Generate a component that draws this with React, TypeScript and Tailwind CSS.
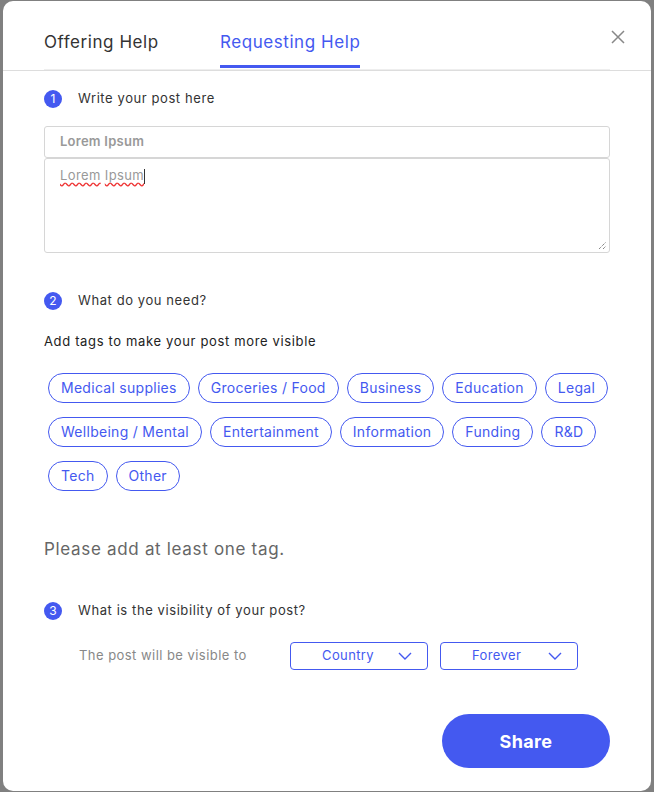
import React from "react"

const tags = [
  ["Medical supplies", "Groceries / Food", "Business", "Education", "Legal"],
  ["Wellbeing / Mental", "Entertainment", "Information", "Funding", "R&D"],
  ["Tech", "Other"],
]

const Step: React.FC<{ n: number; children: React.ReactNode }> = props => (
  <div className="flex items-center h-[18px]">
    <span className="flex items-center justify-center w-[18px] h-[18px] rounded-full bg-[#4459f0] text-white text-[12px]">
      {props.n}
    </span>
    <span className="ml-4 text-[13px] tracking-[0.045em] text-[#333]">{props.children}</span>
  </div>
)

const Chevron = () => (
  <svg width="14" height="8" viewBox="0 0 14 8" fill="none" stroke="#4459f0" strokeWidth="1.4">
    <path d="M1 1l6 6 6-6" />
  </svg>
)

const Select: React.FC<{ label: string }> = props => (
  <div className="flex items-center w-[138px] h-[28px] border border-[#4459f0] rounded-[4px] pl-[31px] pr-[15px] text-[13px] tracking-[0.03em] text-[#4459f0]">
    <span className="flex-1">{props.label}</span>
    <Chevron />
  </div>
)

export default function App() {
  return (
    <div className="bg-[#808080] w-[654px] h-[792px] pt-px px-[3px] font-['Inter',sans-serif]">
      <div className="bg-white rounded-[10px] h-[790px] relative">
        <button className="absolute right-[25px] top-[28px] text-[#888]">
          <svg width="16" height="16" viewBox="0 0 16 16" stroke="currentColor" strokeWidth="1.5">
            <path d="M2 2l12 12M14 2L2 14" />
          </svg>
        </button>
        <div className="border-b border-[#ddd]">
          <div className="mx-[41px] border-b border-[#eee] flex pt-[29px] h-[69px] tracking-[0.035em]">
            <div className="text-[17px] text-[#333] w-[176px]">Offering Help</div>
            <div className="text-[17px] text-[#4459f0] border-b-[3px] border-[#4459f0] h-[38px]">Requesting Help</div>
          </div>
        </div>

        <div className="px-[41px] pt-[19px]">
          <Step n={1}>Write your post here</Step>
          <div className="mt-[18px] border border-[#d6d6d6] rounded-[3px] h-[32px] flex items-center px-[15px] text-[13px] tracking-[0.02em] font-semibold text-[#999]">
            Lorem Ipsum
          </div>
          <div className="border border-[#d6d6d6] rounded-[3px] h-[95px] px-[15px] pt-[7px] text-[13px] tracking-[0.03em] text-[#999] relative">
            <span className="underline decoration-wavy decoration-[#e33] underline-offset-2">Lorem</span>{" "}
            <span className="underline decoration-wavy decoration-[#e33] underline-offset-2">Ipsum</span>
            <span className="inline-block w-px h-[15px] bg-[#333] align-middle" />
            <svg className="absolute right-[2px] bottom-[2px]" width="9" height="9" viewBox="0 0 9 9" stroke="#555" strokeWidth="1" strokeDasharray="1 1">
              <path d="M1 8L8 1M5 8L8 5" />
            </svg>
          </div>

          <div className="mt-[39px]">
            <Step n={2}>What do you need?</Step>
          </div>
          <p className="mt-[22px] text-[13px] tracking-[0.05em] text-[#222]">Add tags to make your post more visible</p>
          <div className="mt-[21px] ml-[4px] flex flex-col gap-[14px]">
            {tags.map((row, i) => (
              <div key={i} className="flex gap-[8px]">
                {row.map(t => (
                  <span
                    key={t}
                    className="h-[30px] flex items-center px-[12px] rounded-full border border-[#4459f0] text-[14px] tracking-[0.02em] text-[#4459f0]"
                  >
                    {t}
                  </span>
                ))}
              </div>
            ))}
          </div>

          <p className="mt-[46px] text-[17px] tracking-[0.04em] text-[#666]">Please add at least one tag.</p>

          <div className="mt-[40px]">
            <Step n={3}>What is the visibility of your post?</Step>
          </div>
          <div className="mt-[22px] flex items-center pl-[35px]">
            <span className="w-[211px] text-[13px] tracking-[0.035em] text-[#888]">The post will be visible to</span>
            <div className="flex gap-[12px]">
              <Select label="Country" />
              <Select label="Forever" />
            </div>
          </div>

          <div className="mt-[44px] flex justify-end">
            <button className="w-[168px] h-[54px] rounded-full bg-[#4459f0] text-white text-[18px] tracking-[0.02em] font-bold">
              Share
            </button>
          </div>
        </div>
      </div>
    </div>
  )
}
